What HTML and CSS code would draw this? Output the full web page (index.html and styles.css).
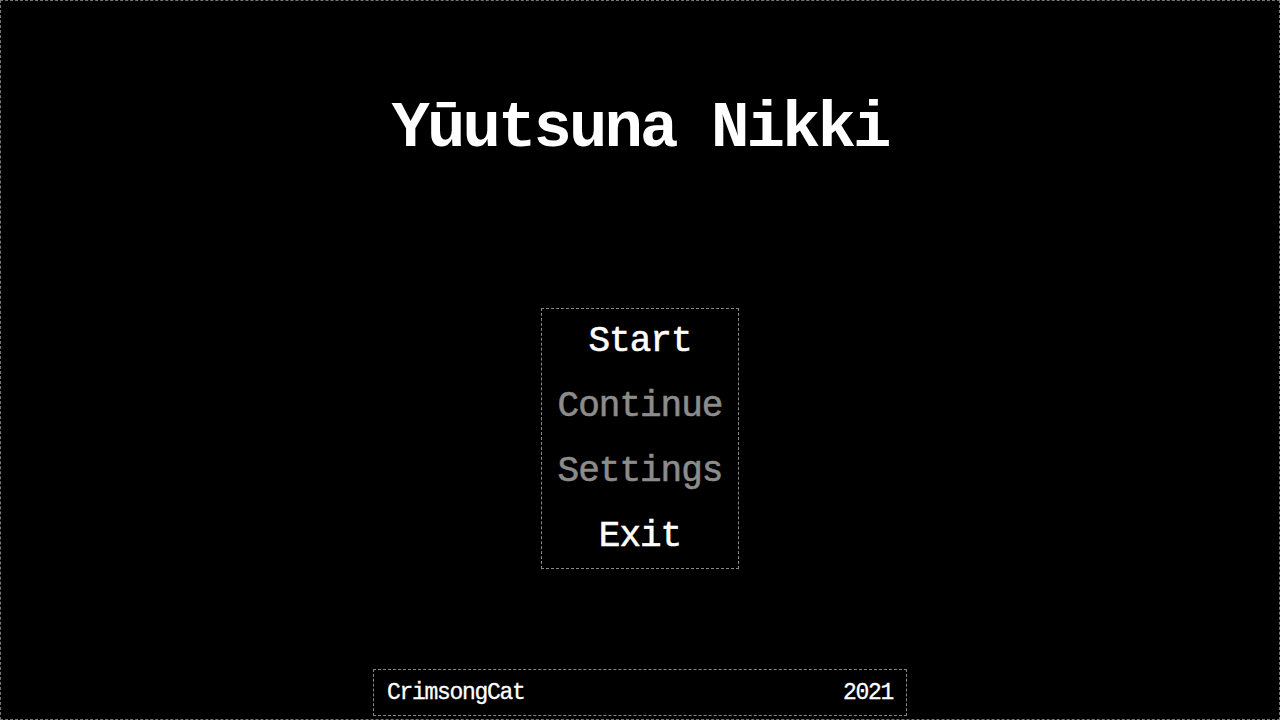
FILE: index.html
```html
<!DOCTYPE html>
<html lang="en">
<head>
<meta charset="utf-8">
<title>Yūutsuna Nikki</title>
<link rel="stylesheet" href="styles.css">
</head>
<body>
<div class="screen">
  <h1 class="title">Yūutsuna Nikki</h1>
  <nav class="menu">
    <div class="item active">Start</div>
    <div class="item disabled">Continue</div>
    <div class="item disabled">Settings</div>
    <div class="item active">Exit</div>
  </nav>
  <footer class="footer">
    <span class="author">CrimsongCat</span>
    <span class="year">2021</span>
  </footer>
</div>
</body>
</html>
```

FILE: styles.css
```css
html, body {
  margin: 0;
  padding: 0;
  background: #000;
}
body {
  width: 1280px;
  height: 720px;
  overflow: hidden;
  font-family: "Liberation Mono", "Courier New", monospace;
  color: #fff;
}
.screen {
  box-sizing: border-box;
  width: 1280px;
  height: 720px;
  border: 1px dashed #777;
  display: flex;
  flex-direction: column;
  align-items: center;
}
.title {
  margin: 96px 0 0;
  font-size: 64px;
  line-height: 64px;
  letter-spacing: -2.9px;
  font-weight: bold;
  white-space: nowrap;
}
.menu {
  margin-top: 147px;
  box-sizing: border-box;
  width: 198px;
  height: 261px;
  border: 1px dashed #888;
  display: flex;
  flex-direction: column;
  align-items: center;
}
.item {
  font-size: 36px;
  line-height: 65px;
  height: 65px;
  letter-spacing: -1px;
  white-space: nowrap;
  -webkit-text-stroke: 0.6px currentColor;
}
.item.active { color: #fff; }
.item.disabled { color: #8c8c8c; }
.footer {
  margin-top: auto;
  margin-bottom: 3px;
  box-sizing: border-box;
  width: 534px;
  height: 47px;
  border: 1px dashed #888;
  display: flex;
  justify-content: space-between;
  align-items: center;
  padding: 0 13px;
  font-size: 23px;
  letter-spacing: -1.3px;
  -webkit-text-stroke: 0.3px currentColor;
}
```
